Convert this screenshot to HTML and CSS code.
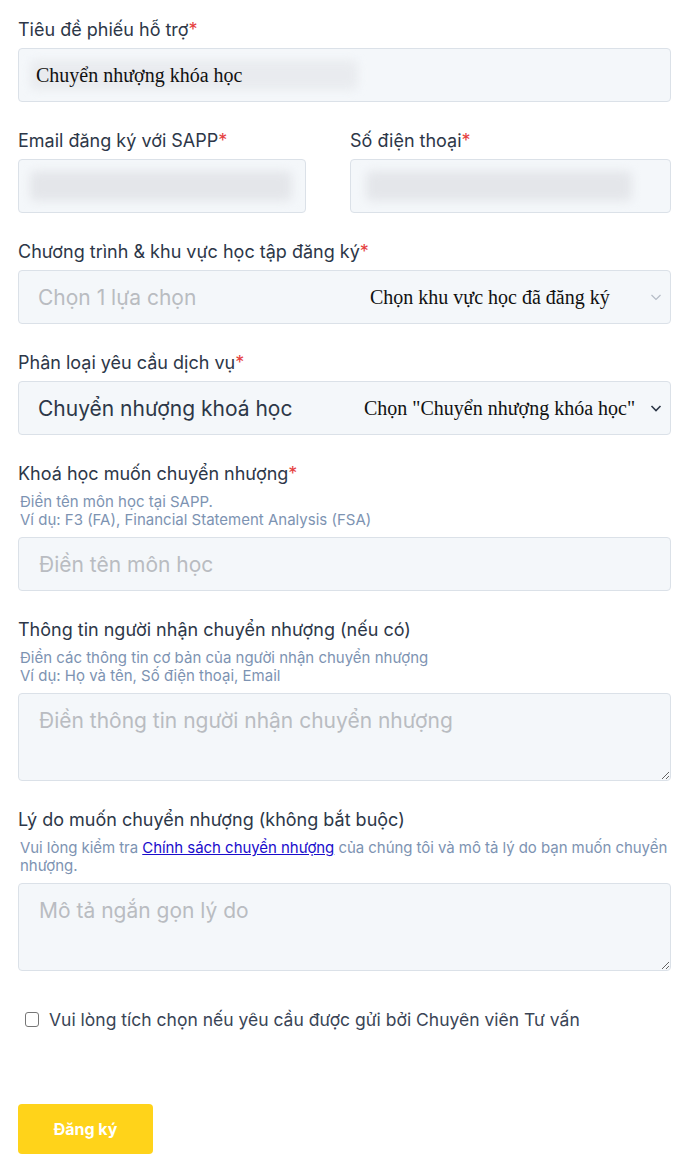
FILE: index.html
```html
<!DOCTYPE html>
<html lang="vi">
<head>
<meta charset="utf-8">
<title>Phiếu hỗ trợ</title>
<link rel="stylesheet" href="styles.css">
</head>
<body>
<form class="form">
  <div class="group">
    <label class="label">Tiêu đề phiếu hỗ trợ<span class="req">*</span></label>
    <div class="wrap">
      <input class="input" type="text">
      <div class="blur blur-title"></div>
      <span class="note note-title">Chuyển nhượng khóa học</span>
    </div>
  </div>

  <div class="row">
    <div class="group">
      <label class="label">Email đăng ký với SAPP<span class="req">*</span></label>
      <div class="wrap">
        <input class="input" type="email">
        <div class="blur blur-email"></div>
      </div>
    </div>
    <div class="group">
      <label class="label">Số điện thoại<span class="req">*</span></label>
      <div class="wrap">
        <input class="input" type="tel">
        <div class="blur blur-phone"></div>
      </div>
    </div>
  </div>

  <div class="group">
    <label class="label">Chương trình &amp; khu vực học tập đăng ký<span class="req">*</span></label>
    <div class="wrap">
      <select class="select select-empty">
        <option>Chọn 1 lựa chọn</option>
      </select>
      <span class="note note-area">Chọn khu vực học đã đăng ký</span>
    </div>
  </div>

  <div class="group">
    <label class="label">Phân loại yêu cầu dịch vụ<span class="req">*</span></label>
    <div class="wrap">
      <select class="select select-filled">
        <option>Chuyển nhượng khoá học</option>
      </select>
      <span class="note note-type">Chọn "Chuyển nhượng khóa học"</span>
    </div>
  </div>

  <div class="group">
    <label class="label">Khoá học muốn chuyển nhượng<span class="req">*</span></label>
    <p class="help">Điền tên môn học tại SAPP.<br>Ví dụ: F3 (FA), Financial Statement Analysis (FSA)</p>
    <input class="input" type="text" placeholder="Điền tên môn học">
  </div>

  <div class="group">
    <label class="label">Thông tin người nhận chuyển nhượng (nếu có)</label>
    <p class="help">Điền các thông tin cơ bản của người nhận chuyển nhượng<br>Ví dụ: Họ và tên, Số điện thoại, Email</p>
    <textarea class="textarea" placeholder="Điền thông tin người nhận chuyển nhượng"></textarea>
  </div>

  <div class="group">
    <label class="label">Lý do muốn chuyển nhượng (không bắt buộc)</label>
    <p class="help help-wide">Vui lòng kiểm tra <a class="link" href="#">Chính sách chuyển nhượng</a> của chúng tôi và mô tả lý do bạn muốn chuyển nhượng.</p>
    <textarea class="textarea" placeholder="Mô tả ngắn gọn lý do"></textarea>
  </div>

  <label class="check">
    <input type="checkbox" class="checkbox">
    <span>Vui lòng tích chọn nếu yêu cầu được gửi bởi Chuyên viên Tư vấn</span>
  </label>

  <button class="submit" type="button">Đăng ký</button>
</form>
</body>
</html>
```

FILE: styles.css
```css
* { box-sizing: border-box; }

body {
  margin: 0;
  background: #ffffff;
  font-family: Inter, "Noto Sans", sans-serif;
  color: #2d3748;
}

.form {
  width: 653px;
  margin-left: 18px;
  padding-top: 17px;
  display: flex;
  flex-direction: column;
}

.group {
  display: flex;
  flex-direction: column;
  margin-bottom: 26px;
}

.row {
  display: grid;
  grid-template-columns: 288px 1fr;
  column-gap: 44px;
}

.label {
  font-size: 18px;
  line-height: 25px;
  color: #2d3748;
  margin-bottom: 6px;
}

.req { color: #e53e3e; }

.help {
  margin: 1px 0 8px 2px;
  font-size: 15px;
  line-height: 18px;
  color: #7d93b2;
}

.help-wide {
  margin-right: -8px;
  letter-spacing: -0.05px;
}

.link {
  color: #1a0dcc;
  text-decoration: underline;
}

.wrap { position: relative; }

.input,
.select,
.textarea {
  display: block;
  width: 100%;
  background: #f4f7fa;
  border: 1px solid #dbe1e8;
  border-radius: 4px;
  font-family: Inter, "Noto Sans", sans-serif;
  font-size: 21px;
  color: #2d3748;
  outline: none;
}

.input {
  height: 54px;
  padding: 0 20px;
}

.input::placeholder,
.textarea::placeholder { color: #b9bcc1; }

.select {
  height: 54px;
  padding: 0 40px 0 19px;
  appearance: none;
  -webkit-appearance: none;
  background-repeat: no-repeat;
  background-position: right 7px center;
  background-size: 14px 14px;
}

.select-empty {
  color: #b9bcc1;
  background-image: url("data:image/svg+xml,%3Csvg xmlns='http://www.w3.org/2000/svg' viewBox='0 0 14 14'%3E%3Cpath d='M2.5 5l4.5 4.5L11.5 5' fill='none' stroke='%23b5bcc6' stroke-width='1.2'/%3E%3C/svg%3E");
}

.select-filled {
  color: #2d3748;
  background-image: url("data:image/svg+xml,%3Csvg xmlns='http://www.w3.org/2000/svg' viewBox='0 0 14 14'%3E%3Cpath d='M2.5 5l4.5 4.5L11.5 5' fill='none' stroke='%232d3748' stroke-width='1.6'/%3E%3C/svg%3E");
}

.textarea {
  height: 88px;
  padding: 14px 20px;
  resize: vertical;
  line-height: 26px;
}

.blur {
  position: absolute;
  background: #e4e6ea;
  filter: blur(5px);
  border-radius: 6px;
  pointer-events: none;
}
.blur-title { left: 12px; top: 12px; width: 328px; height: 30px; opacity: 0.65; }
.blur-email { left: 12px; top: 12px; width: 262px; height: 30px; }
.blur-phone { left: 16px; top: 12px; width: 266px; height: 30px; }

.note {
  position: absolute;
  font-family: "Liberation Serif", "Times New Roman", serif;
  font-size: 20px;
  color: #111;
  pointer-events: none;
  top: 50%;
  transform: translateY(-50%);
}
.note-title { left: 18px; }
.note-area { left: 352px; }
.note-type { left: 346px; }

.check {
  display: flex;
  align-items: center;
  gap: 10px;
  margin: 10px 0 0 7px;
  font-size: 17.5px;
  line-height: 25px;
  color: #3a4556;
}

.checkbox {
  appearance: none;
  -webkit-appearance: none;
  width: 14px;
  height: 15px;
  margin: 0;
  border: 1.5px solid #767676;
  border-radius: 3px;
  background: #fff;
  flex: none;
}

.submit {
  margin-top: 72px;
  width: 135px;
  height: 50px;
  border: none;
  border-radius: 4px;
  background: #ffd31a;
  color: #ffffff;
  font-family: Inter, "Noto Sans", sans-serif;
  font-weight: 700;
  font-size: 16px;
  cursor: pointer;
}
```
